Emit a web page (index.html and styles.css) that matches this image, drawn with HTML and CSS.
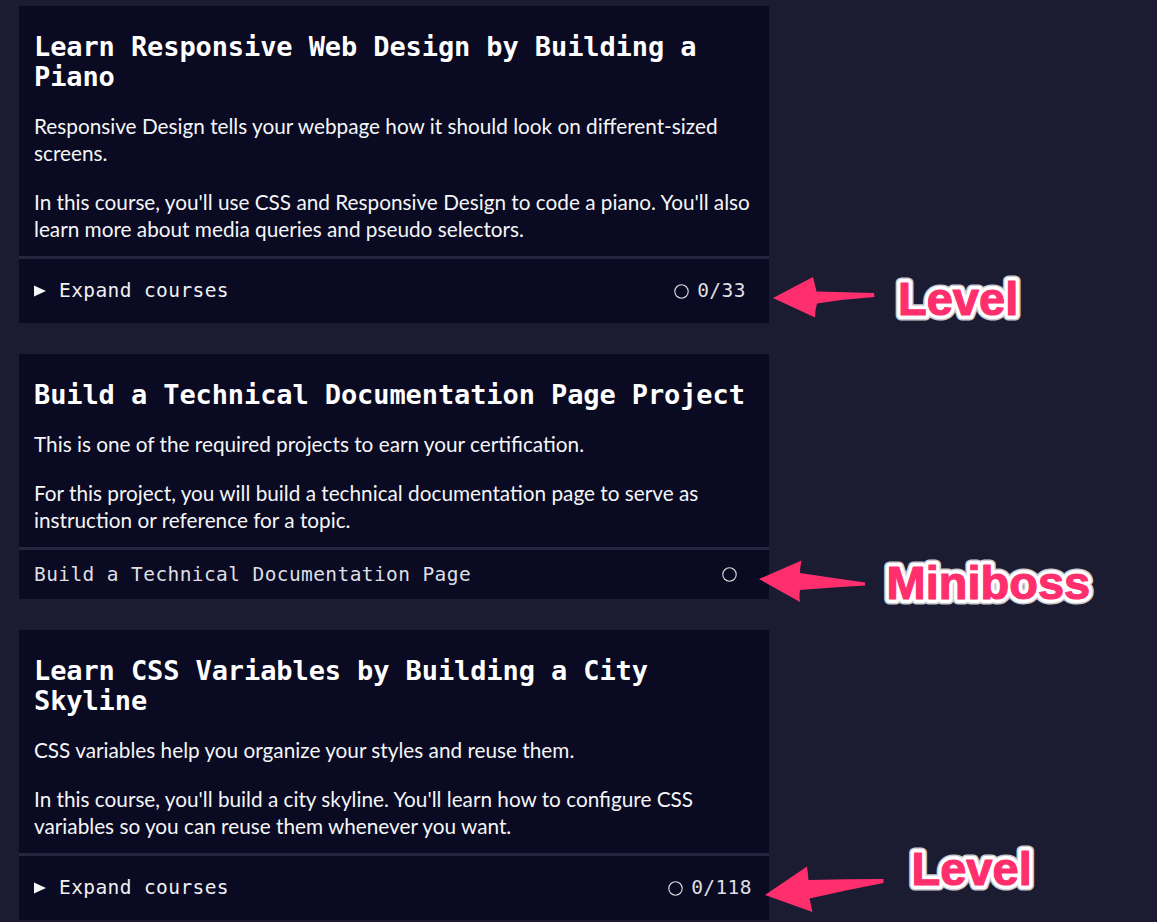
FILE: index.html
```html
<!DOCTYPE html>
<html lang="en">
<head>
<meta charset="utf-8">
<title>Curriculum</title>
<link rel="stylesheet" href="styles.css">
</head>
<body>
<main class="map">
  <section class="block">
    <div class="block-header">
      <h3 class="block-title">Learn Responsive Web Design by Building a Piano</h3>
      <p class="block-desc">Responsive Design tells your webpage how it should look on different-sized screens.</p>
      <p class="block-desc">In this course, you'll use CSS and Responsive Design to code a piano. You'll also learn more about media queries and pseudo selectors.</p>
    </div>
    <div class="block-footer level">
      <span class="expand"><svg class="tri" width="12" height="12" viewBox="0 0 12 12"><polygon points="0,0.5 12,6 0,11.5" fill="#f5f6f7"/></svg>Expand courses</span>
      <span class="progress"><svg class="ring" width="15" height="15" viewBox="0 0 15 15"><circle cx="7.5" cy="7.5" r="6.7" fill="none" stroke="#dfdfe2" stroke-width="1.1"/></svg>0/33</span>
    </div>
  </section>

  <section class="block">
    <div class="block-header">
      <h3 class="block-title">Build a Technical Documentation Page Project</h3>
      <p class="block-desc">This is one of the required projects to earn your certification.</p>
      <p class="block-desc">For this project, you will build a technical documentation page to serve as instruction or reference for a topic.</p>
    </div>
    <div class="block-footer miniboss">
      <span class="project">Build a Technical Documentation Page</span>
      <svg class="ring" width="15" height="15" viewBox="0 0 15 15"><circle cx="7.5" cy="7.5" r="6.7" fill="none" stroke="#dfdfe2" stroke-width="1.1"/></svg>
    </div>
  </section>

  <section class="block">
    <div class="block-header">
      <h3 class="block-title">Learn CSS Variables by Building a City Skyline</h3>
      <p class="block-desc">CSS variables help you organize your styles and reuse them.</p>
      <p class="block-desc">In this course, you'll build a city skyline. You'll learn how to configure CSS variables so you can reuse them whenever you want.</p>
    </div>
    <div class="block-footer level">
      <span class="expand"><svg class="tri" width="12" height="12" viewBox="0 0 12 12"><polygon points="0,0.5 12,6 0,11.5" fill="#f5f6f7"/></svg>Expand courses</span>
      <span class="progress"><svg class="ring" width="15" height="15" viewBox="0 0 15 15"><circle cx="7.5" cy="7.5" r="6.7" fill="none" stroke="#dfdfe2" stroke-width="1.1"/></svg>0/118</span>
    </div>
  </section>
</main>

<svg class="annotations" width="1157" height="922" viewBox="0 0 1157 922">
  <g fill="#ff2f6e">
    <path d="M773 298 L813 277 Q815 285 816.5 291.5 Q845 292 874 293 L874.5 297 Q845 299 817 303.5 Q815 310 815 317.5 Z"/>
    <path d="M759 579 L801.5 560.5 Q800 567 800 573 Q833 578 865 582.5 L865 585.5 Q833 587 800 590 Q799 596 800 602 Z"/>
    <path d="M765 895 L807 866.5 Q808 873 808.5 880 Q846 879 883.5 879 L883.5 883 Q846 890 809.5 898.5 Q811 905 812.5 912 Z"/>
  </g>
  <g class="label">
    <text x="898" y="315" class="halo">Level</text>
    <text x="898" y="315" class="edge">Level</text>
    <text x="898" y="315" class="fill">Level</text>
    <text x="886.5" y="598.5" class="halo">Miniboss</text>
    <text x="886.5" y="598.5" class="edge">Miniboss</text>
    <text x="886.5" y="598.5" class="fill">Miniboss</text>
    <text x="911.5" y="884.5" class="halo">Level</text>
    <text x="911.5" y="884.5" class="edge">Level</text>
    <text x="911.5" y="884.5" class="fill">Level</text>
  </g>
</svg>
</body>
</html>
```

FILE: styles.css
```css
html, body {
  margin: 0;
  padding: 0;
}

body {
  background: #1b1b32;
  width: 1157px;
  height: 922px;
  overflow: hidden;
  position: relative;
  font-family: "Lato", "Noto Sans", sans-serif;
  color: #f5f6f7;
}

.map {
  display: flex;
  flex-direction: column;
  gap: 31px;
  width: 750px;
  padding: 6px 0 0 19px;
}

.block {
  display: flex;
  flex-direction: column;
  background: #0a0a23;
}

.block-header {
  padding: 26px 8px 13.5px 15px;
}

.block-title {
  margin: 0 0 20.5px 0;
  font-family: "DejaVu Sans Mono", "Liberation Mono", monospace;
  font-weight: bold;
  font-size: 27px;
  line-height: 30px;
  letter-spacing: -0.1px;
  color: #ffffff;
}

.block-desc {
  margin: 0 0 22px 0;
  font-size: 20.75px;
  line-height: 27px;
  color: #f5f6f7;
}

.block-desc:last-child {
  margin-bottom: 0;
}

.block-footer {
  display: flex;
  align-items: center;
  justify-content: space-between;
  border-top: 3px solid #262640;
  font-family: "DejaVu Sans Mono", "Liberation Mono", monospace;
  font-size: 19.5px;
  letter-spacing: 0.4px;
  line-height: 24px;
  color: #dfdfe2;
}

.level {
  padding: 20px 9px 20px 15px;
}

.miniboss {
  padding: 12.5px 32px 12.5px 15px;
}

.expand {
  display: flex;
  align-items: center;
  gap: 13px;
  color: #f0f0f2;
}

.tri {
  display: block;
}

.progress {
  display: flex;
  align-items: center;
  justify-content: center;
  gap: 8px;
  width: 100px;
}

.ring {
  display: block;
  flex: none;
}

.annotations {
  position: absolute;
  top: 0;
  left: 0;
  pointer-events: none;
}

.label text {
  font-family: "Liberation Sans", Arial, sans-serif;
  font-weight: bold;
  font-size: 47px;
  stroke-linejoin: round;
}

.label .halo {
  fill: none;
  stroke: #c9c9cf;
  stroke-width: 11px;
}

.label .edge {
  fill: none;
  stroke: #ffffff;
  stroke-width: 8px;
}

.label .fill {
  fill: #ff2f6e;
  stroke: #ff2f6e;
  stroke-width: 1.2px;
}
```
